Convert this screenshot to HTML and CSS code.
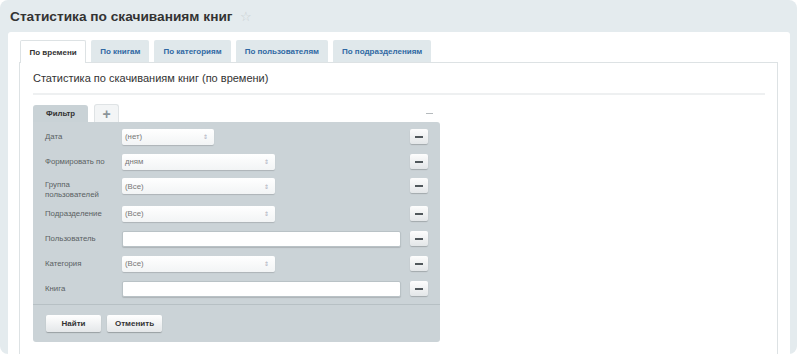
FILE: index.html
```html
<!DOCTYPE html>
<html lang="ru">
<head>
  <meta charset="UTF-8" />
  <title>Статистика по скачиваниям книг</title>
  <link rel="stylesheet" href="styles.css">
</head>
<body>
  <div class="frame">
    <div class="page-title">
      Статистика по скачиваниям книг
      <span class="star">&#9734;</span>
    </div>

    <div class="workarea">
      <div class="tabs">
        <div class="tab active">По времени</div>
        <div class="tab">По книгам</div>
        <div class="tab">По категориям</div>
        <div class="tab">По пользователям</div>
        <div class="tab">По подразделениям</div>
      </div>

      <div class="tab-body">
        <h2 class="report-title">Статистика по скачиваниям книг (по времени)</h2>

        <div class="filter">
          <div class="filter-head">
            <div class="ftab">Фильтр</div>
            <div class="ftab plus">+</div>
            <div class="collapse"></div>
          </div>

          <div class="filter-box">
            <div class="row">
              <div class="label">Дата</div>
              <div class="field"><div class="select short">(нет)<span class="arr">&#8661;</span></div></div>
              <div class="minus"><span></span></div>
            </div>
            <div class="row">
              <div class="label">Формировать по</div>
              <div class="field"><div class="select">дням<span class="arr">&#8661;</span></div></div>
              <div class="minus"><span></span></div>
            </div>
            <div class="row tall">
              <div class="label">Группа<br>пользователей</div>
              <div class="field"><div class="select">(Все)<span class="arr">&#8661;</span></div></div>
              <div class="minus"><span></span></div>
            </div>
            <div class="row">
              <div class="label">Подразделение</div>
              <div class="field"><div class="select">(Все)<span class="arr">&#8661;</span></div></div>
              <div class="minus"><span></span></div>
            </div>
            <div class="row">
              <div class="label">Пользователь</div>
              <div class="field"><div class="input"></div></div>
              <div class="minus"><span></span></div>
            </div>
            <div class="row">
              <div class="label">Категория</div>
              <div class="field"><div class="select">(Все)<span class="arr">&#8661;</span></div></div>
              <div class="minus"><span></span></div>
            </div>
            <div class="row">
              <div class="label">Книга</div>
              <div class="field"><div class="input"></div></div>
              <div class="minus"><span></span></div>
            </div>

            <div class="buttons">
              <div class="btn">Найти</div>
              <div class="btn">Отменить</div>
            </div>
          </div>
        </div>
      </div>
    </div>
  </div>
</body>
</html>
```

FILE: styles.css
```css
* {
  box-sizing: border-box;
  margin: 0;
  padding: 0;
}

html, body {
  background: #fff;
  font-family: 'Liberation Sans', Arial, sans-serif;
  color: #333;
  width: 100%;
  height: 100%;
  overflow: hidden;
}

.frame {
  width: 797px;
  height: 354px;
  background: #e4ebee;
  border-radius: 8px;
  padding: 0 7px 0 8px;
  display: flex;
  flex-direction: column;
}

.page-title {
  height: 32px;
  display: flex;
  align-items: center;
  padding-left: 2px;
  font-size: 13.7px;
  font-weight: bold;
  color: #333;
}

.star {
  color: #c9cfd2;
  font-weight: normal;
  font-size: 13px;
  margin-left: 7px;
}

.workarea {
  flex: 1;
  background: #fff;
  border-radius: 3px 3px 0 0;
  padding: 8px 12px 0 11px;
  display: flex;
  flex-direction: column;
}

/* Вкладки */
.tabs {
  display: flex;
  gap: 5px;
  padding-left: 1px;
  height: 22px;
}

.tab {
  height: 22px;
  padding: 0 9px;
  background: #e0e8eb;
  color: #3069a3;
  font-size: 8px;
  font-weight: bold;
  display: flex;
  align-items: center;
  border-radius: 2px 2px 0 0;
}

.tab.active {
  background: #fff;
  color: #333;
  border: 1px solid #dde2e4;
  border-bottom: none;
  height: 23px;
  padding: 0 8.5px;
  position: relative;
  z-index: 1;
}

.tab-body {
  flex: 1;
  border: 1px solid #dde2e4;
  border-bottom: none;
  padding: 0 12px 0 13px;
}

.report-title {
  font-size: 11px;
  font-weight: normal;
  color: #333;
  padding: 9px 0 9px;
  border-bottom: 2px solid #eef0f1;
}

/* Фильтр */
.filter {
  width: 407px;
  margin-top: 9px;
}

.filter-head {
  display: flex;
  align-items: flex-end;
  gap: 6px;
  height: 18px;
}

.ftab {
  height: 17px;
  padding: 0 13px;
  background: #c9d2d6;
  font-size: 7.8px;
  font-weight: bold;
  display: flex;
  align-items: center;
  border-radius: 3px 3px 0 0;
}

.ftab.plus {
  height: 18px;
  width: 25px;
  padding: 0;
  justify-content: center;
  background: #f3f5f6;
  border: 1px solid #dfe3e5;
  border-bottom: none;
  color: #8a9399;
  font-size: 14px;
  font-weight: bold;
}

.collapse {
  margin-left: auto;
  margin-right: 7px;
  margin-bottom: 8px;
  width: 7px;
  height: 1px;
  background: #b5babd;
}

.filter-box {
  background: #cbd3d7;
  border-radius: 0 3px 3px 3px;
  padding: 2px 12px 0 12px;
}

.row {
  display: flex;
  align-items: center;
  height: 25px;
}

.row.tall {
  height: 27px;
  align-items: flex-start;
  padding-top: 4px;
}

.row.tall .label {
  padding-top: 2px;
}

.label {
  width: 77px;
  font-size: 7.8px;
  color: #5a5f62;
  line-height: 10px;
}

.field {
  flex: 1;
}

.select,
.input {
  height: 16px;
  background: #fff;
  border-radius: 2px;
  box-shadow: 0 1px 1px rgba(0, 0, 0, 0.15);
}

.select {
  width: 153px;
  display: flex;
  align-items: center;
  padding-left: 3px;
  padding-right: 6px;
  font-size: 7.8px;
  color: #777;
  background: linear-gradient(#fff, #f2f4f5);
}

.select.short {
  width: 92px;
}

.input {
  width: 279px;
  border: 1px solid #b9c2c6;
}

.arr {
  margin-left: auto;
  font-size: 6px;
  color: #aab;
}

.minus {
  width: 18px;
  height: 15px;
  background: linear-gradient(#fdfdfd, #e3e6e8);
  border-radius: 2px;
  box-shadow: 0 1px 1px rgba(0, 0, 0, 0.2);
  display: flex;
  align-items: center;
  justify-content: center;
}

.minus span {
  width: 8px;
  height: 2px;
  background: #50575b;
}

.buttons {
  display: flex;
  gap: 6px;
  border-top: 1px solid #b7c0c4;
  margin: 3px -12px 0;
  padding: 10px 13px 10px;
}

.btn {
  width: 55px;
  height: 17px;
  background: linear-gradient(#fff, #e4e7e9);
  border-radius: 2px;
  box-shadow: 0 1px 1px rgba(0, 0, 0, 0.25);
  font-size: 8px;
  font-weight: bold;
  color: #333;
  display: flex;
  align-items: center;
  justify-content: center;
}
```
